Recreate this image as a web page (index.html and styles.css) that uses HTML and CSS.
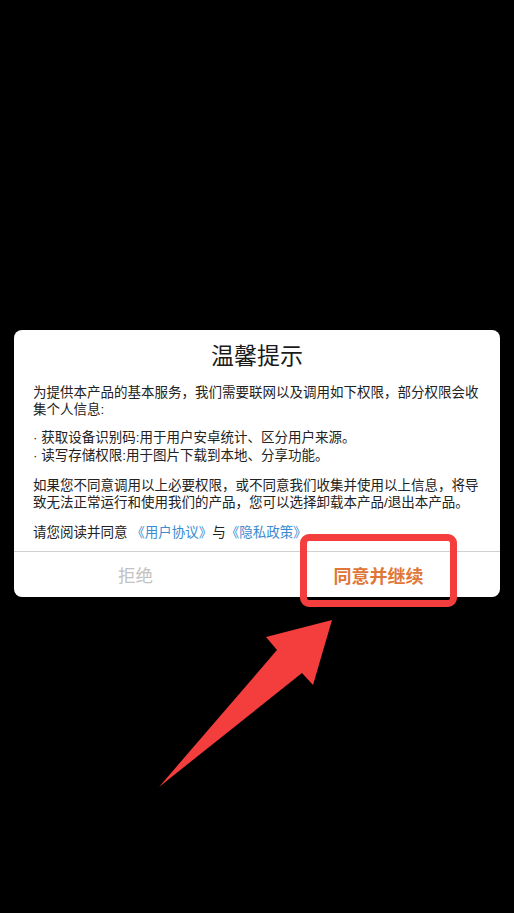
FILE: index.html
```html
<!DOCTYPE html>
<html lang="zh-CN">
<head>
    <meta charset="UTF-8">
    <meta name="viewport" content="width=device-width, initial-scale=1.0">
    <title>温馨提示</title>
    <link rel="stylesheet" href="styles.css">
</head>
<body>
    <div class="screen">
        <div class="dialog">
            <h1 class="dialog-title">温馨提示</h1>
            <div class="dialog-body">
                <p>为提供本产品的基本服务，我们需要联网以及调用如下权限，部分权限会收集个人信息:</p>
                <p class="perms">· 获取设备识别码:用于用户安卓统计、区分用户来源。<br>· 读写存储权限:用于图片下载到本地、分享功能。</p>
                <p class="notice">如果您不同意调用以上必要权限，或不同意我们收集并使用以上信息，将导致无法正常运行和使用我们的产品，您可以选择卸载本产品/退出本产品。</p>
                <p>请您阅读并同意 <a class="link" href="#">《用户协议》</a>与<a class="link" href="#">《隐私政策》</a></p>
            </div>
            <div class="dialog-actions">
                <button class="btn btn-reject">拒绝</button>
                <button class="btn btn-agree">同意并继续</button>
            </div>
        </div>

        <!-- annotation overlay -->
        <div class="highlight"></div>
        <svg class="arrow" viewBox="150 610 190 185" width="190" height="185">
            <polygon points="332,620 313,685 302,673 159,787 277,650 266,637" fill="#f43d3d"/>
        </svg>
    </div>
</body>
</html>
```

FILE: styles.css
```css
body {
    margin: 0;
    background-color: #000;
    font-family: "Liberation Sans", "Noto Sans CJK SC", sans-serif;
}

.screen {
    position: relative;
    width: 514px;
    height: 913px;
    overflow: hidden;
}

.dialog {
    margin: 330px 14px 0;
    background-color: #fff;
    border-radius: 8px;
    overflow: hidden;
}

.dialog-title {
    margin: 0;
    padding-top: 11px;
    font-size: 23px;
    line-height: 30px;
    font-weight: normal;
    text-align: center;
    color: #1a1a1a;
}

.dialog-body {
    padding: 13px 19px 10px;
    font-size: 13.5px;
    line-height: 17px;
    color: #222;
}

.dialog-body p {
    margin: 0 0 11px;
}

.dialog-body p:last-child {
    margin-bottom: 0;
}

.dialog-body .perms {
    line-height: 18px;
    margin-bottom: 12px;
}

.dialog-body .notice {
    margin-bottom: 13px;
}

.link {
    color: #3a8bd2;
    text-decoration: none;
}

.dialog-actions {
    display: flex;
    border-top: 1px solid #d0d0d0;
}

.btn {
    flex: 1;
    height: 45px;
    border: none;
    background: none;
    font-family: inherit;
    font-size: 17.5px;
    cursor: pointer;
}

.btn-reject {
    color: #c2c2c2;
}

.btn-agree {
    color: #e07637;
    font-weight: bold;
    font-size: 18px;
}

.highlight {
    position: absolute;
    left: 300px;
    top: 534px;
    width: 143px;
    height: 59px;
    border: 7px solid #f43d3d;
    border-radius: 9px;
}

.arrow {
    position: absolute;
    left: 150px;
    top: 610px;
}
```
